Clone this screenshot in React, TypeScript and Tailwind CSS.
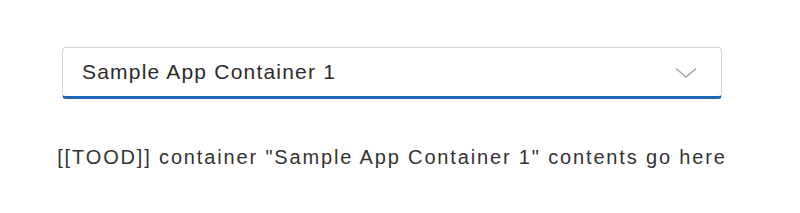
export default function App() {
	return (
		<div className="min-h-[213px] w-full bg-white pl-[62px] pt-[47px] font-['Liberation_Sans',sans-serif]">
			<div className="flex w-[660px] flex-col items-center">
				{/* Container picker */}
				<div className="flex h-[52px] w-full items-center justify-between rounded-[4px] border border-[#d4d4d4] border-b-[3px] border-b-[#1d68b4] pl-[19px] pr-[24px]">
					<span className="text-[21px] tracking-[1.2px] text-[#2b2b2b]">Sample App Container 1</span>
					<svg width="22" height="12" viewBox="0 0 22 12" fill="none" className="mt-[2px]">
						<path d="M1 1.5 L11 10 L21 1.5" stroke="#a3a3a3" strokeWidth="1.4" />
					</svg>
				</div>

				{/* Container body */}
				<p className="mt-[43px] whitespace-nowrap text-[20px] tracking-[1.85px] text-[#333]">
					[[TOOD]] container "Sample App Container 1" contents go here
				</p>
			</div>
		</div>
	);
}
